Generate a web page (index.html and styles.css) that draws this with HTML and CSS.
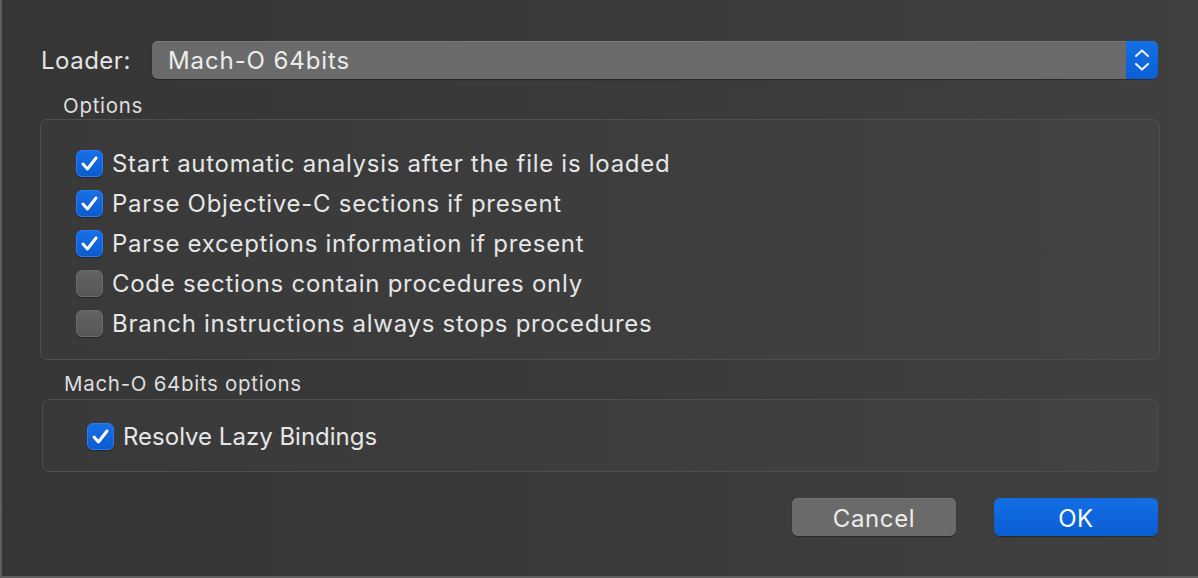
FILE: index.html
```html
<!DOCTYPE html>
<html>
<head>
<meta charset="utf-8">
<link rel="stylesheet" href="styles.css">
</head>
<body>
<div class="dialog">
  <div class="loader-row">
    <span class="loader-label">Loader:</span>
    <div class="popup">
      <span class="popup-text">Mach-O 64bits</span>
      <span class="stepper">
        <svg width="18" height="26" viewBox="0 0 18 26"><path d="M3 9 L9 3.5 L15 9" fill="none" stroke="#e8eefc" stroke-width="2.2" stroke-linecap="round" stroke-linejoin="round"/><path d="M3 17 L9 22.5 L15 17" fill="none" stroke="#e8eefc" stroke-width="2.2" stroke-linecap="round" stroke-linejoin="round"/></svg>
      </span>
    </div>
  </div>

  <div class="group-label first">Options</div>
  <div class="box box-options">
    <div class="row"><span class="cb on"><svg viewBox="0 0 25 25"><path d="M6 13 L10.5 18 L19 7" fill="none" stroke="#fff" stroke-width="3" stroke-linecap="round" stroke-linejoin="round"/></svg></span><span>Start automatic analysis after the file is loaded</span></div>
    <div class="row"><span class="cb on"><svg viewBox="0 0 25 25"><path d="M6 13 L10.5 18 L19 7" fill="none" stroke="#fff" stroke-width="3" stroke-linecap="round" stroke-linejoin="round"/></svg></span><span>Parse Objective-C sections if present</span></div>
    <div class="row"><span class="cb on"><svg viewBox="0 0 25 25"><path d="M6 13 L10.5 18 L19 7" fill="none" stroke="#fff" stroke-width="3" stroke-linecap="round" stroke-linejoin="round"/></svg></span><span>Parse exceptions information if present</span></div>
    <div class="row"><span class="cb"></span><span>Code sections contain procedures only</span></div>
    <div class="row"><span class="cb"></span><span>Branch instructions always stops procedures</span></div>
  </div>

  <div class="group-label second">Mach-O 64bits options</div>
  <div class="box box-mach">
    <div class="row"><span class="cb on"><svg viewBox="0 0 25 25"><path d="M6 13 L10.5 18 L19 7" fill="none" stroke="#fff" stroke-width="3" stroke-linecap="round" stroke-linejoin="round"/></svg></span><span class="tight">Resolve Lazy Bindings</span></div>
  </div>

  <div class="buttons">
    <button class="btn cancel">Cancel</button>
    <button class="btn ok">OK</button>
  </div>
</div>
</body>
</html>
```
FILE: styles.css
```css
html, body {
  margin: 0;
  padding: 0;
}
body {
  width: 1198px;
  height: 578px;
  overflow: hidden;
  font-family: Inter, "Liberation Sans", sans-serif;
  color: #e4e4e4;
}
.dialog {
  box-sizing: border-box;
  width: 1198px;
  height: 578px;
  border-left: 2px solid #5e5e5e;
  border-bottom: 2px solid #5e5e5e;
  background: linear-gradient(90deg, #363636 0%, #3a3a3a 50%, #404040 100%);
  padding: 41px 40px 0 39px;
  display: flex;
  flex-direction: column;
}
.loader-row {
  display: flex;
  align-items: center;
  height: 38px;
}
.loader-label {
  width: 111px;
  font-size: 24px;
  letter-spacing: 0.5px;
}
.popup {
  flex: 1;
  height: 38px;
  display: flex;
  align-items: center;
  background: #6a6a6a;
  border-radius: 6px;
  box-shadow: inset 0 1px 0 #777, 0 1px 1px rgba(0,0,0,0.35);
  overflow: hidden;
}
.popup-text {
  flex: 1;
  padding-left: 16px;
  font-size: 24px;
  letter-spacing: 0.9px;
  color: #ececec;
}
.stepper {
  width: 32px;
  height: 38px;
  display: flex;
  align-items: center;
  justify-content: center;
  background: linear-gradient(180deg, #1370e6, #0b5fd4);
}
.group-label {
  font-size: 20.5px;
  letter-spacing: 0.7px;
  color: #dedede;
}
.group-label.first {
  margin: 14px 0 0 22px;
  height: 26px;
}
.group-label.second {
  margin: 11px 0 0 23px;
  height: 28px;
}
.box {
  box-sizing: border-box;
  border: 1.5px solid #4e4e4e;
  border-radius: 7px;
  background: rgba(255,255,255,0.02);
}
.box-options {
  margin: 0 -2px 0 -1px;
  height: 241px;
  padding: 23px 0 0 35px;
}
.box-mach {
  margin: 0 0 0 1px;
  height: 73px;
  padding: 16px 0 0 44px;
}
.row {
  display: flex;
  align-items: center;
  height: 40px;
  font-size: 24px;
  letter-spacing: 0.72px;
  color: #e6e6e6;
}
.row .tight {
  letter-spacing: 0px;
}
.cb {
  box-sizing: border-box;
  width: 27px;
  height: 27px;
  border-radius: 6px;
  margin-right: 9px;
  background: linear-gradient(180deg, #626262, #575757);
  border: 1px solid #6a6a6a;
  box-shadow: 0 1px 1px rgba(0,0,0,0.3);
  flex: none;
}
.cb.on {
  background: linear-gradient(180deg, #1a6fe6, #0b5bd0);
  border: 1px solid #2a7cf0;
}
.cb svg {
  width: 25px;
  height: 25px;
  display: block;
}
.buttons {
  display: flex;
  justify-content: flex-end;
  gap: 38px;
  margin-top: 26px;
}
.btn {
  width: 164px;
  height: 38px;
  border: none;
  border-radius: 6px;
  font-family: Inter, "Liberation Sans", sans-serif;
  font-size: 24px;
  letter-spacing: 0.6px;
  color: #ececec;
  padding: 2px 0 0 0;
  box-shadow: 0 1px 1px rgba(0,0,0,0.35);
}
.cancel {
  background: #6a6a6a;
  box-shadow: inset 0 1px 0 #767676, 0 1px 1px rgba(0,0,0,0.35);
}
.ok {
  background: linear-gradient(180deg, #136ee5, #0b5ed3);
  color: #fff;
}
```
